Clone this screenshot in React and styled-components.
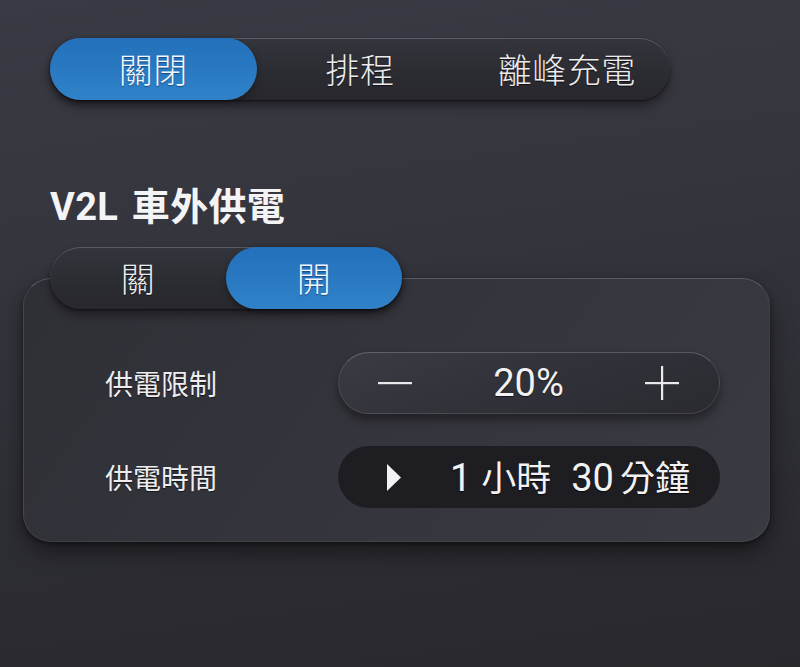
import React, { useState } from "react";
import styled, { createGlobalStyle, css } from "styled-components";

const GlobalStyle = createGlobalStyle`
  html, body {
    margin: 0;
    padding: 0;
    background: #2a2a30;
  }
  * { box-sizing: border-box; }
`;

const Page = styled.div`
  width: 800px;
  height: 667px;
  overflow: hidden;
  padding: 38px 30px 0 50px;
  background: linear-gradient(172deg, #3a3a44 0%, #35353e 35%, #2d2d34 70%, #28282d 100%);
  font-family: "Noto Sans CJK TC", "Noto Sans", sans-serif;
  color: #f2f2f4;
`;

const Track = styled.div`
  display: grid;
  grid-template-columns: repeat(${(p) => p.$count}, 1fr);
  width: ${(p) => p.$width}px;
  height: 62px;
  border-radius: 31px;
  background: linear-gradient(180deg, #34343c 0%, #2b2b32 60%, #27272d 100%);
  border-top: 1.5px solid #5b5b67;
  box-shadow: 0 6px 10px rgba(0, 0, 0, 0.4), 0 1px 2px rgba(0, 0, 0, 0.5);
  position: relative;
  z-index: 2;
`;

const Segment = styled.div`
  display: flex;
  align-items: center;
  justify-content: center;
  margin-top: -1.5px;
  border-radius: 31px;
  font-size: 34px;
  font-weight: 300;
  letter-spacing: 0.5px;
  color: #ececef;
  text-shadow: 0 1px 1px rgba(0, 0, 0, 0.6);
  cursor: pointer;
  ${(p) =>
    p.$active &&
    css`
      background: linear-gradient(180deg, #2370bb 0%, #2a7bc3 60%, #2f82c8 100%);
      color: #f4f8fc;
      text-shadow: 0 1px 1px rgba(0, 30, 70, 0.5);
      box-shadow: 0 3px 6px rgba(0, 0, 0, 0.35);
    `}
`;

const Title = styled.h2`
  margin: 85px 0 0;
  font-family: Roboto, "Noto Sans CJK TC", sans-serif;
  font-size: 38px;
  line-height: 44px;
  font-weight: 700;
  color: #f4f4f6;
  letter-spacing: 0.3px;
  word-spacing: 4px;
`;

const ToggleWrap = styled.div`
  margin-top: 18px;
  margin-bottom: -31px;
`;

const Card = styled.div`
  margin-left: -27px;
  width: 747px;
  height: 264px;
  padding: 73px 49px 0 81px;
  border-radius: 28px;
  background: linear-gradient(125deg, #2f2f36 0%, #34343c 45%, #3a3a43 100%);
  border: 1px solid rgba(255, 255, 255, 0.07);
  border-top: 1.5px solid #5a5a66;
  box-shadow: 0 10px 22px rgba(0, 0, 0, 0.45), 0 2px 4px rgba(0, 0, 0, 0.35);
  display: grid;
  grid-template-columns: 1fr 382px;
  grid-auto-rows: 62px;
  row-gap: 32px;
  align-items: center;
`;

const Label = styled.div`
  font-size: 28px;
  color: #ededf0;
  text-shadow: 0 1px 1px rgba(0, 0, 0, 0.6);
`;

const Pill = styled.div`
  height: 62px;
  border-radius: 31px;
  display: grid;
  align-items: center;
  font-family: Roboto, "Noto Sans CJK TC", sans-serif;
  color: #f2f2f4;
`;

const Stepper = styled(Pill)`
  grid-template-columns: 34px 1fr 34px;
  padding: 0 40px 0 39px;
  background: linear-gradient(160deg, #3b3b44 0%, #32323a 45%, #2a2a31 100%);
  border: 1px solid rgba(255, 255, 255, 0.1);
  border-top-color: rgba(255, 255, 255, 0.22);
  box-shadow: 0 6px 10px rgba(0, 0, 0, 0.4);
`;

const Value = styled.div`
  text-align: center;
  font-size: 38px;
  line-height: 1;
  text-shadow: 0 1px 1px rgba(0, 0, 0, 0.6);
`;

const Timer = styled(Pill)`
  grid-template-columns: auto 1fr;
  padding: 0 30px 0 49px;
  background: #1d1d22;
`;

const Duration = styled.div`
  justify-self: end;
  display: flex;
  align-items: baseline;
  font-size: 37px;
  line-height: 1;
  text-shadow: 0 1px 1px rgba(0, 0, 0, 0.6);
`;

const Num = styled.span`
  font-size: 38px;
  margin-right: ${(p) => p.$gap}px;
`;

const Unit = styled.span`
  font-family: "Noto Sans CJK TC", sans-serif;
  font-size: 35px;
  margin-right: ${(p) => p.$gap || 0}px;
`;

const Icon = styled.svg`
  display: block;
`;

function Segmented({ options, value, onChange, width }) {
  return (
    <Track $count={options.length} $width={width}>
      {options.map((o) => (
        <Segment key={o} $active={o === value} onClick={() => onChange(o)}>
          {o}
        </Segment>
      ))}
    </Track>
  );
}

export default function App() {
  const [mode, setMode] = useState("關閉");
  const [v2l, setV2l] = useState("開");
  const [limit, setLimit] = useState(20);

  return (
    <>
      <GlobalStyle />
      <Page>
        <Segmented options={["關閉", "排程", "離峰充電"]} value={mode} onChange={setMode} width={620} />
        <Title>V2L 車外供電</Title>
        <ToggleWrap>
          <Segmented options={["關", "開"]} value={v2l} onChange={setV2l} width={352} />
        </ToggleWrap>
        <Card>
          <Label>供電限制</Label>
          <Stepper>
            <Icon width="34" height="34" viewBox="0 0 34 34" onClick={() => setLimit(Math.max(0, limit - 10))}>
              <rect x="0" y="16" width="34" height="2.2" fill="#e9e9ec" />
            </Icon>
            <Value>{limit}%</Value>
            <Icon width="34" height="34" viewBox="0 0 34 34" onClick={() => setLimit(Math.min(100, limit + 10))}>
              <rect x="0" y="16" width="34" height="2.2" fill="#e9e9ec" />
              <rect x="16" y="0" width="2.2" height="34" fill="#e9e9ec" />
            </Icon>
          </Stepper>
          <Label>供電時間</Label>
          <Timer>
            <Icon width="14" height="27" viewBox="0 0 14 27">
              <polygon points="0,0 14,13.5 0,27" fill="#f2f2f4" />
            </Icon>
            <Duration>
              <Num $gap={10}>1</Num>
              <Unit $gap={20}>小時</Unit>
              <Num $gap={6}>30</Num>
              <Unit>分鐘</Unit>
            </Duration>
          </Timer>
        </Card>
      </Page>
    </>
  );
}
